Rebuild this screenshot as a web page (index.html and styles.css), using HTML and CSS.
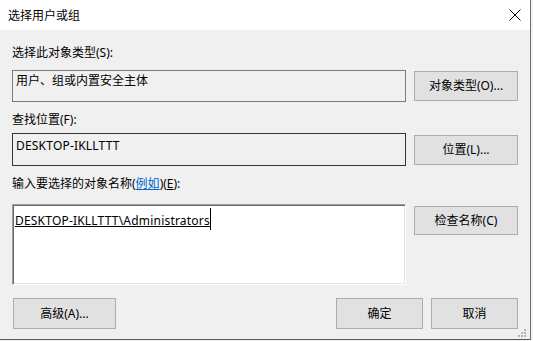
FILE: index.html
```html
<!DOCTYPE html>
<html lang="zh-CN">
<head>
<meta charset="utf-8">
<title>选择用户或组</title>
<link rel="stylesheet" href="styles.css">
</head>
<body>
<div class="dialog">
  <div class="titlebar">
    <span class="title">选择用户或组</span>
    <svg class="close" width="12" height="12" viewBox="0 0 12 12"><path d="M0.5 0.5 L11.5 11.5 M11.5 0.5 L0.5 11.5" stroke="#000" stroke-width="1" fill="none"/></svg>
  </div>
  <div class="content">
    <div class="label label-first">选择此对象类型(S):</div>
    <div class="row">
      <div class="field field-types">用户、组或内置安全主体</div>
      <div class="btn side">对象类型(O)...</div>
    </div>
    <div class="label label-loc">查找位置(F):</div>
    <div class="row">
      <div class="field field-loc"><span class="latin">DESKTOP-IKLLTTT</span></div>
      <div class="btn side">位置(L)...</div>
    </div>
    <div class="label label-names">输入要选择的对象名称(<span class="link">例如</span>)(<span class="ul">E</span>):</div>
    <div class="row row-top">
      <div class="names"><span class="resolved latin">DESKTOP-IKLLTTT\Administrators</span><span class="caret"></span></div>
      <div class="btn side side-check">检查名称(C)</div>
    </div>
    <div class="footer">
      <div class="btn adv">高级(A)...</div>
      <div class="spacer"></div>
      <div class="btn ok">确定</div>
      <div class="btn cancel">取消</div>
    </div>
  </div>
  <svg class="grip" width="9" height="9" viewBox="0 0 9 9">
    <rect x="6" y="0" width="2" height="2" fill="#b4b4b4"/>
    <rect x="3" y="3" width="2" height="2" fill="#b4b4b4"/>
    <rect x="6" y="3" width="2" height="2" fill="#b4b4b4"/>
    <rect x="0" y="6" width="2" height="2" fill="#b4b4b4"/>
    <rect x="3" y="6" width="2" height="2" fill="#b4b4b4"/>
    <rect x="6" y="6" width="2" height="2" fill="#b4b4b4"/>
  </svg>
</div>
</body>
</html>
```
FILE: styles.css
```css
html, body {
  margin: 0;
  padding: 0;
  background: #f2f2f2;
}
body {
  font-family: "Noto Sans", "Noto Sans CJK SC", sans-serif;
  font-size: 12px;
  line-height: 16px;
  color: #000;
}
.dialog {
  position: relative;
  box-sizing: border-box;
  width: 531px;
  height: 340px;
  background: #f0f0f0;
  border-right: 1px solid #707070;
  border-bottom: 1px solid #5a5a5a;
  overflow: hidden;
}
.titlebar {
  height: 30px;
  background: #fff;
  display: flex;
  align-items: center;
  justify-content: space-between;
  padding: 0 9px 0 8px;
}
.title {
  padding-top: 2px;
}
.close {
  display: block;
}
.content {
  padding: 15px 12px 0 12px;
  display: flex;
  flex-direction: column;
}
.label {
  height: 16px;
  white-space: nowrap;
}
.label-first { margin-bottom: 9px; }
.label-loc { margin-top: 10px; margin-bottom: 5px; }
.label-names { margin-top: 10px; margin-bottom: 12px; }
.link {
  color: #0066cc;
  text-decoration: underline;
}
.ul { text-decoration: underline; }
.latin { letter-spacing: 0.2px; }
.row {
  display: flex;
  align-items: center;
  gap: 8px;
}
.row-top { align-items: flex-start; }
.field {
  box-sizing: border-box;
  width: 394px;
  white-space: nowrap;
}
.field-types {
  height: 32px;
  border: 1px solid #7a7a7a;
  padding: 2px 3px;
}
.field-loc {
  height: 33px;
  border: 1px solid #333;
  padding: 4px 3px;
}
.names {
  box-sizing: border-box;
  width: 394px;
  height: 81px;
  background: #fff;
  border: 1px solid;
  border-color: #a0a0a0 #ffffff #ffffff #a0a0a0;
  box-shadow: inset 1px 1px 0 #696969, inset -1px -1px 0 #e3e3e3;
  padding: 8px 2px;
  display: flex;
  align-items: flex-start;
}
.resolved {
  text-decoration: underline;
  white-space: nowrap;
}
.caret {
  display: block;
  width: 1px;
  height: 22px;
  background: #000;
  margin-top: -5px;
  margin-left: 0;
}
.btn {
  box-sizing: border-box;
  background: #e1e1e1;
  border: 1px solid #adadad;
  display: flex;
  align-items: center;
  justify-content: center;
  white-space: nowrap;
}
.side {
  width: 104px;
  height: 30px;
}
.side-check {
  margin-top: 2px;
  height: 29px;
}
.footer {
  display: flex;
  gap: 8px;
  margin-top: 13px;
}
.footer .btn { height: 31px; }
.adv { width: 103px; margin-left: 1px; }
.spacer { flex: 1; }
.ok, .cancel { width: 87px; }
.grip {
  position: absolute;
  right: 3px;
  bottom: 1px;
}
```
